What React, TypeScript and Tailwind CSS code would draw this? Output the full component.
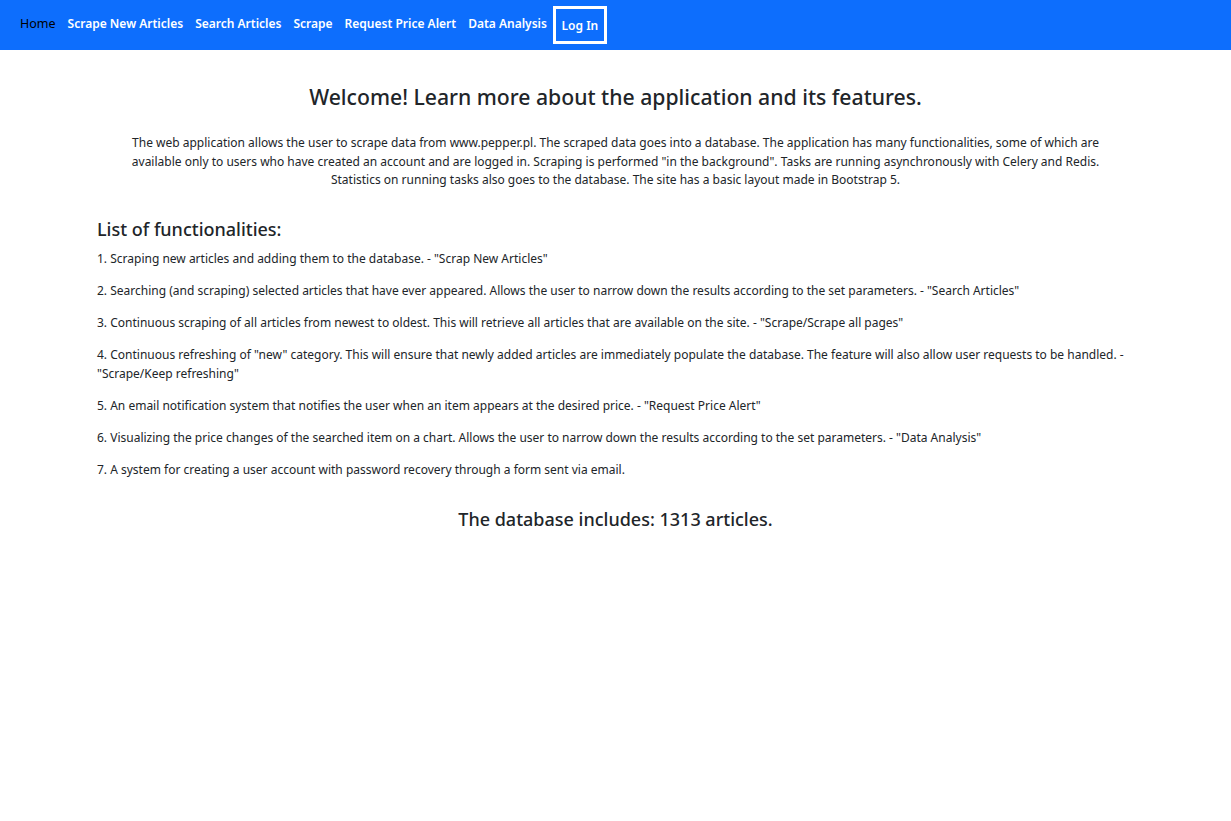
const links = [
  "Scrape New Articles",
  "Search Articles",
  "Scrape",
  "Request Price Alert",
  "Data Analysis",
];

const features = [
  '1. Scraping new articles and adding them to the database. - "Scrap New Articles"',
  '2. Searching (and scraping) selected articles that have ever appeared. Allows the user to narrow down the results according to the set parameters. - "Search Articles"',
  '3. Continuous scraping of all articles from newest to oldest. This will retrieve all articles that are available on the site. - "Scrape/Scrape all pages"',
  '4. Continuous refreshing of "new" category. This will ensure that newly added articles are immediately populate the database. The feature will also allow user requests to be handled. - "Scrape/Keep refreshing"',
  '5. An email notification system that notifies the user when an item appears at the desired price. - "Request Price Alert"',
  '6. Visualizing the price changes of the searched item on a chart. Allows the user to narrow down the results according to the set parameters. - "Data Analysis"',
  "7. A system for creating a user account with password recovery through a form sent via email.",
];

function Navbar() {
  return (
    <nav className="h-[50px] bg-[#0d6efd] flex items-center pl-5 text-[12px]">
      <a href="#" className="text-black mr-[12px] mb-[2px] text-[12.5px]">
        Home
      </a>
      {links.map((l) => (
        <a key={l} href="#" className="text-white font-semibold mr-[12px] mb-[2px]">
          {l}
        </a>
      ))}
      <button className="border-[3px] border-white text-white font-semibold h-[38px] w-[54px] -ml-[6px] pt-[2px]">
        Log In
      </button>
    </nav>
  );
}

export default function App() {
  return (
    <div className="min-h-screen bg-white text-[#212529] font-['Noto_Sans',sans-serif]">
      <Navbar />
      <main className="w-[1037px] mx-auto">
        <h1 className="text-[21.2px] font-medium text-center mt-[32px] leading-[30px]">
          Welcome! Learn more about the application and its features.
        </h1>
        <p className="text-[12px] leading-[18.7px] text-center mt-[22px] px-[25px]">
          The web application allows the user to scrape data from www.pepper.pl. The scraped data goes into a database. The
          application has many functionalities, some of which are available only to users who have created an account and are
          logged in. Scraping is performed "in the background". Tasks are running asynchronously with Celery and Redis.
          Statistics on running tasks also goes to the database. The site has a basic layout made in Bootstrap 5.
        </p>
        <h2 className="text-[18px] font-medium mt-[26px] leading-[27px]">List of functionalities:</h2>
        <div className="text-[12px] leading-[19px] mt-[6px] flex flex-col gap-[13px]">
          {features.map((f) => (
            <p key={f}>{f}</p>
          ))}
        </div>
        <h3 className="text-[18px] font-medium text-center mt-[27px] leading-[27px]">
          The database includes: 1313 articles.
        </h3>
      </main>
    </div>
  );
}
